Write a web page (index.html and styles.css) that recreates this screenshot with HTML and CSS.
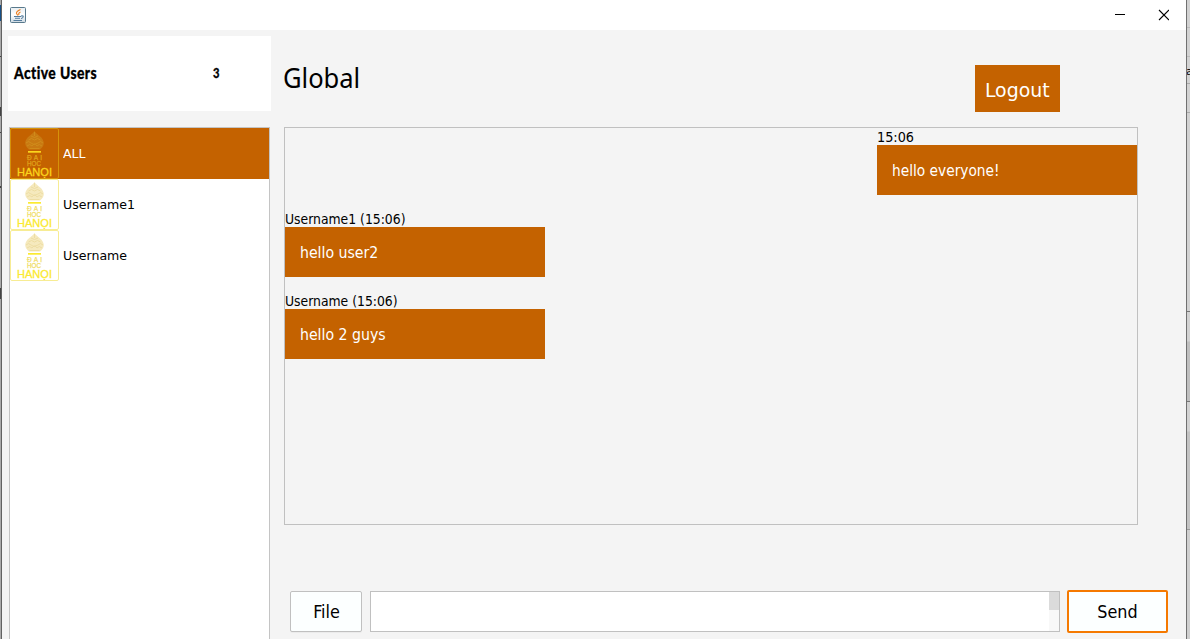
FILE: index.html
```html
<!DOCTYPE html>
<html lang="en">
<head>
<meta charset="utf-8">
<title>Chat</title>
<link rel="stylesheet" href="styles.css">
</head>
<body>
<div class="desktop">
  <div class="edge edge-left"><i></i><i></i><i></i><i></i><i></i><i></i></div>
  <main class="window">
    <header class="titlebar">
      <svg class="app-icon" width="16" height="16" viewBox="0 0 16 16">
        <defs><linearGradient id="tile" x2="0" y2="1"><stop stop-color="#e8eef2"/><stop offset=".5" stop-color="#fff"/><stop offset="1" stop-color="#cbd8e1"/></linearGradient></defs>
        <rect x=".5" y=".5" width="15" height="15" rx="1" fill="url(#tile)" stroke="#58798c"/>
        <path d="M10.500 2.500Q6 4.500 6.500 6.500L8 8.500M10.500 5Q8 6 9 8" fill="none" stroke="#ed8224" stroke-width="1.200"/>
        <path d="M4 9.500h7M5 11.200h5M3.500 13.500h8.500M11 9q3-.5 2 1.300-.7 1-2 1.200" fill="none" stroke="#557d9e" stroke-width="1.100"/>
      </svg>
      <svg class="controls" width="54" height="12" viewBox="0 0 54 12"><path d="M0 5.500h10" stroke="#000"/><path d="M44 1l10 10M54 1L44 11" stroke="#000" stroke-width="1.100"/></svg>
    </header>
    <div class="content">
      <aside class="sidebar">
        <div class="summary"><span class="summary-title">Active Users</span><span class="summary-count">3</span></div>
        <ul class="users">
          <li class="user selected">
            <svg class="crest" viewBox="0 0 49 51">
              <g id="crest">
                <rect class="crest-frame" x=".5" y=".5" width="48" height="50" rx="1.5"/>
                <path class="crest-art" d="M24.500 3C22 7 15.500 9 15.200 15c0 3 2 5 3.800 6.500h11c2-1.500 3.800-3.500 3.800-6.500C33.500 9 27 7 24.500 3Z"/>
                <path class="crest-line" d="M24.500 4v4M21 8q3.500 3 7 0M18.500 12q3-3 6 0 3-3 6 0M16 15q2.500-3 5 0t7 0q2.500-3 5 0M17 18q3-3 5 0 2.500-4 5 0 2-3 5 0M19.500 20.500h10"/>
                <rect class="crest-bar" x="18" y="23" width="13" height="1.700"/>
                <text class="crest-small" x="17" y="31.500" textLength="15">ĐAI</text>
                <text class="crest-small" x="17" y="38" textLength="14" lengthAdjust="spacingAndGlyphs">HOC</text>
                <text class="crest-name" x="7" y="47.500" textLength="35" lengthAdjust="spacingAndGlyphs">HANỌI</text>
              </g>
            </svg>
            <span>ALL</span>
          </li>
          <li class="user"><svg class="crest" viewBox="0 0 49 51"><use href="#crest"/></svg><span>Username1</span></li>
          <li class="user"><svg class="crest" viewBox="0 0 49 51"><use href="#crest"/></svg><span>Username</span></li>
        </ul>
      </aside>
      <section class="chat">
        <div class="chat-head"><h1><span>Global</span></h1><button class="logout"><span>Logout</span></button></div>
        <div class="messages">
          <div class="message own"><div class="meta"><span>15:06</span></div><div class="bubble"><span>hello everyone!</span></div></div>
          <div class="message"><div class="meta"><span>Username1 (15:06)</span></div><div class="bubble"><span>hello user2</span></div></div>
          <div class="message"><div class="meta"><span>Username (15:06)</span></div><div class="bubble"><span>hello 2 guys</span></div></div>
        </div>
        <div class="composer">
          <button class="btn file"><span>File</span></button>
          <div class="input"><div class="scroll"><div class="thumb"></div></div></div>
          <button class="btn send"><span>Send</span></button>
        </div>
      </section>
    </div>
  </main>
  <div class="edge edge-right"><b>a</b></div>
</div>
</body>
</html>
```
FILE: styles.css
```css
* { box-sizing: border-box; }
body { margin: 0; overflow: hidden; font-family: "DejaVu Sans Condensed", "DejaVu Sans", sans-serif; font-stretch: condensed; color: #000; }
button { font: inherit; margin: 0; padding: 0; }
span { display: inline-block; transform-origin: 0 50%; white-space: nowrap; }
.desktop { display: grid; grid-template-columns: 2px 1184px 4px; height: 639px; }

.edge { overflow: hidden; }
.edge-left { background: linear-gradient(90deg, #aaa 1px, #626262 1px); display: flex; flex-direction: column; }
.edge-left i { width: 1px; height: 1px; background: #444; }
.edge-left i:nth-child(1) { margin-top: 5px; height: 16px; background: #175087; }
.edge-left i:nth-child(2) { margin-top: 35px; }
.edge-left i:nth-child(3) { margin-top: 50px; height: 9px; }
.edge-left i:nth-child(4) { margin-top: 16px; }
.edge-left i:nth-child(5) { margin-top: 53px; height: 2px; }
.edge-left i:nth-child(6) { margin-top: 100px; height: 11px; }
.edge-right {
  border-left: 1px solid #707070;
  background:
    linear-gradient(#bbb, #bbb) 0 27px / 3px 1px no-repeat,
    linear-gradient(#bbb, #bbb) 0 56px / 3px 1px no-repeat,
    linear-gradient(#aaa, #aaa) 0 83px / 3px 1px no-repeat,
    linear-gradient(#aaa, #aaa) 0 112px / 3px 1px no-repeat,
    linear-gradient(#777, #777) 0 311px / 3px 1px no-repeat,
    linear-gradient(#777, #777) 0 401px / 3px 1px no-repeat,
    linear-gradient(#999, #999) 0 529px / 3px 1px no-repeat,
    linear-gradient(#d2d2d2 341px, #bfbfbf 342px 401px, #d2d2d2 402px 431px, #c3c3c3 432px 529px, #cfcfcf 530px);
}
.edge-right b { display: block; margin: 65px 0 0 -1px; font: 11px/14px "DejaVu Sans", sans-serif; }

.window { background: #f4f4f4; display: flex; flex-direction: column; }
.titlebar { height: 30px; background: #fff; display: flex; justify-content: space-between; padding: 7px 17px 0 8px; }
.controls { margin-top: 2px; }
.content { flex: 1; display: grid; grid-template-columns: 269px 1fr; column-gap: 13px; padding-top: 6px; }

.sidebar { padding-left: 6px; display: flex; flex-direction: column; }
.summary { height: 75px; background: #fff; display: flex; align-items: center; padding: 0 0 2px 6px; font: 900 16px/20px Lato, sans-serif; }
.summary-title { width: 199px; letter-spacing: .5px; transform: scaleX(.865); -webkit-text-stroke: .3px #000; }
.summary-count { font-size: 14px; transform: scaleX(.8); -webkit-text-stroke: .3px #000; }
.users { flex: 1; width: 261px; list-style: none; margin: 16px 0 0 1px; padding: 0; background: #fff; border: 1px solid #c4c4c4; border-bottom: 0; }
.user { height: 51px; display: flex; align-items: center; gap: 4px; font: 13px/17px "DejaVu Sans", sans-serif; --frame: #f7ec94; --art: #f5e9bd; --line: #ecdba0; --small: #f0dd62; --name: #fbea30; }
.user span { transform: scaleX(.967); }
.user.selected { background: #c46200; color: #fff; --frame: #d6920a; --art: #c97a12; --line: #d08d1c; --small: #e0a21a; --name: #fbd51c; }
.crest { width: 49px; height: 51px; display: block; }
.crest-frame { fill: none; stroke: var(--frame); }
.crest-art { fill: var(--art); }
.crest-line { fill: none; stroke: var(--line); stroke-width: .9; }
.crest-bar { fill: var(--name); }
.crest-small { font: 6.5px "Liberation Sans", sans-serif; fill: var(--small); stroke: var(--small); stroke-width: .25; }
.crest-name { font: 11.5px "Liberation Sans", sans-serif; fill: var(--name); stroke: var(--name); stroke-width: .3; }

.chat-head { height: 91px; width: 854px; display: flex; justify-content: space-between; }
.chat-head h1 { margin: 24px 0 0 -1px; font: 27px/36px "Noto Sans", sans-serif; }
.chat-head h1 span { transform: scaleX(.945); }
.logout { width: 85px; height: 47px; margin: 29px 78px 0 0; padding-top: 2px; border: 0; background: #c46200; color: #fff; font: 20px/24px "DejaVu Sans", sans-serif; }
.logout span { transform: scaleX(.945); transform-origin: 50% 50%; }
.messages { width: 854px; height: 398px; border: 1px solid #c0c0c0; display: flex; flex-direction: column; gap: 15px; }
.message { width: 260px; }
.message.own { align-self: flex-end; }
.meta { height: 17px; font-size: 14px; line-height: 18px; }
.meta span { transform: scaleX(.985); }
.own .meta span { transform: scaleX(1.02); }
.bubble { height: 50px; padding-left: 15px; background: #c46200; color: #fff; font-size: 16px; line-height: 51px; }
.bubble span { transform: scaleX(.98); }
.own .bubble span { transform: scaleX(.955); }
.composer { display: flex; align-items: center; padding: 65px 0 0 6px; }
.btn { border: 1px solid #c0c0c0; border-radius: 2px; background: #fcffff; font-size: 18px; color: #000; }
.btn span { transform: scaleX(.99); transform-origin: 50% 50%; }
.file { width: 72px; height: 41px; margin-right: 8px; box-shadow: 0 1px #ebebeb; }
.input { width: 690px; height: 41px; margin-right: 7px; border: 1px solid #c0c0c0; background: #fff; display: flex; justify-content: flex-end; }
.scroll { width: 10px; background: #f8f8f8; }
.thumb { height: 18px; background: #dbdbdb; }
.send { width: 101px; height: 43px; border: 2px solid #f57900; }
```
